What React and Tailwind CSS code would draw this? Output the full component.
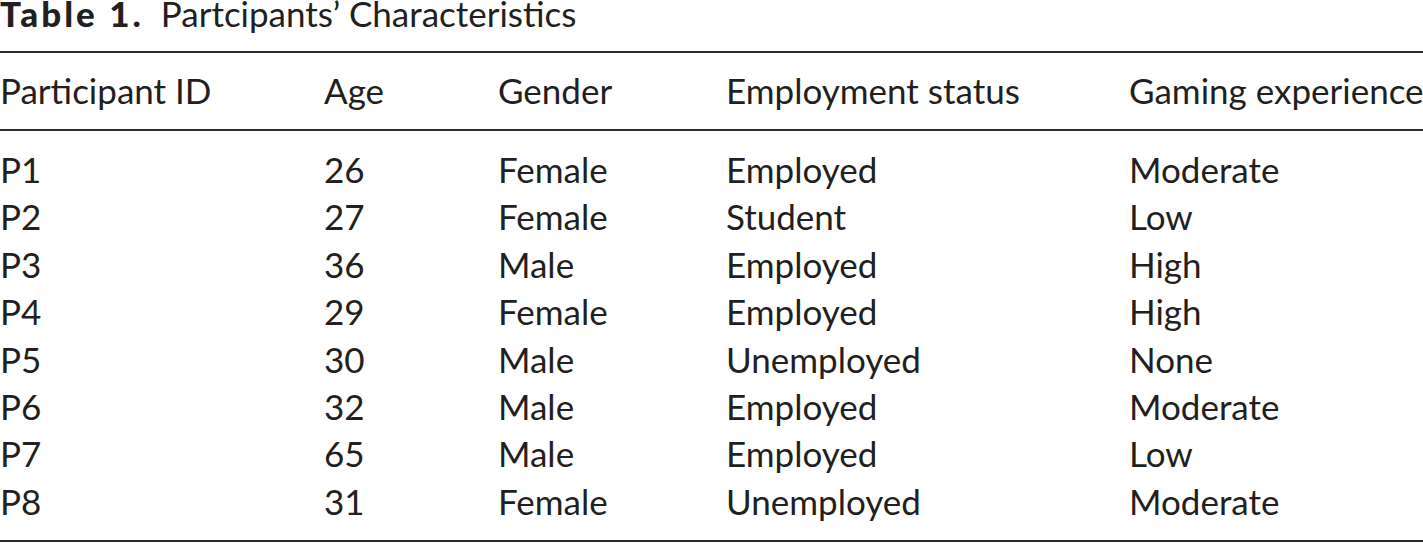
import React from "react";

const rows = [
  ["P1", "26", "Female", "Employed", "Moderate"],
  ["P2", "27", "Female", "Student", "Low"],
  ["P3", "36", "Male", "Employed", "High"],
  ["P4", "29", "Female", "Employed", "High"],
  ["P5", "30", "Male", "Unemployed", "None"],
  ["P6", "32", "Male", "Employed", "Moderate"],
  ["P7", "65", "Male", "Employed", "Low"],
  ["P8", "31", "Female", "Unemployed", "Moderate"],
];

const headers = ["Participant ID", "Age", "Gender", "Employment status", "Gaming experience"];

const cols = "grid grid-cols-[324px_174px_228px_403px_1fr]";

export default function App() {
  return (
    <div className="w-[1423px] h-[544px] bg-white text-[#231f20] font-['Lato',sans-serif] text-[35px] overflow-hidden">
      <div className="pt-[4px] leading-[19px] whitespace-nowrap">
        <span className="font-black tracking-[3px] mr-[17px]">Table 1.</span>Partcipants’ Characteristics
      </div>

      <div className="mt-[28px] border-t-2 border-[#2b2b2b]">
        <div className={cols + " pt-[16px] pb-[18px] leading-[42px] border-b-2 border-[#2b2b2b]"}>
          {headers.map((h) => (
            <div key={h} className="whitespace-nowrap">{h}</div>
          ))}
        </div>

        <div className="pt-[15px] pb-[15px] border-b-2 border-[#2b2b2b]">
          {rows.map((r) => (
            <div key={r[0]} className={cols + " leading-[47.4px]"}>
              {r.map((c, i) => (
                <div key={i} className="whitespace-nowrap">{c}</div>
              ))}
            </div>
          ))}
        </div>
      </div>
    </div>
  );
}
